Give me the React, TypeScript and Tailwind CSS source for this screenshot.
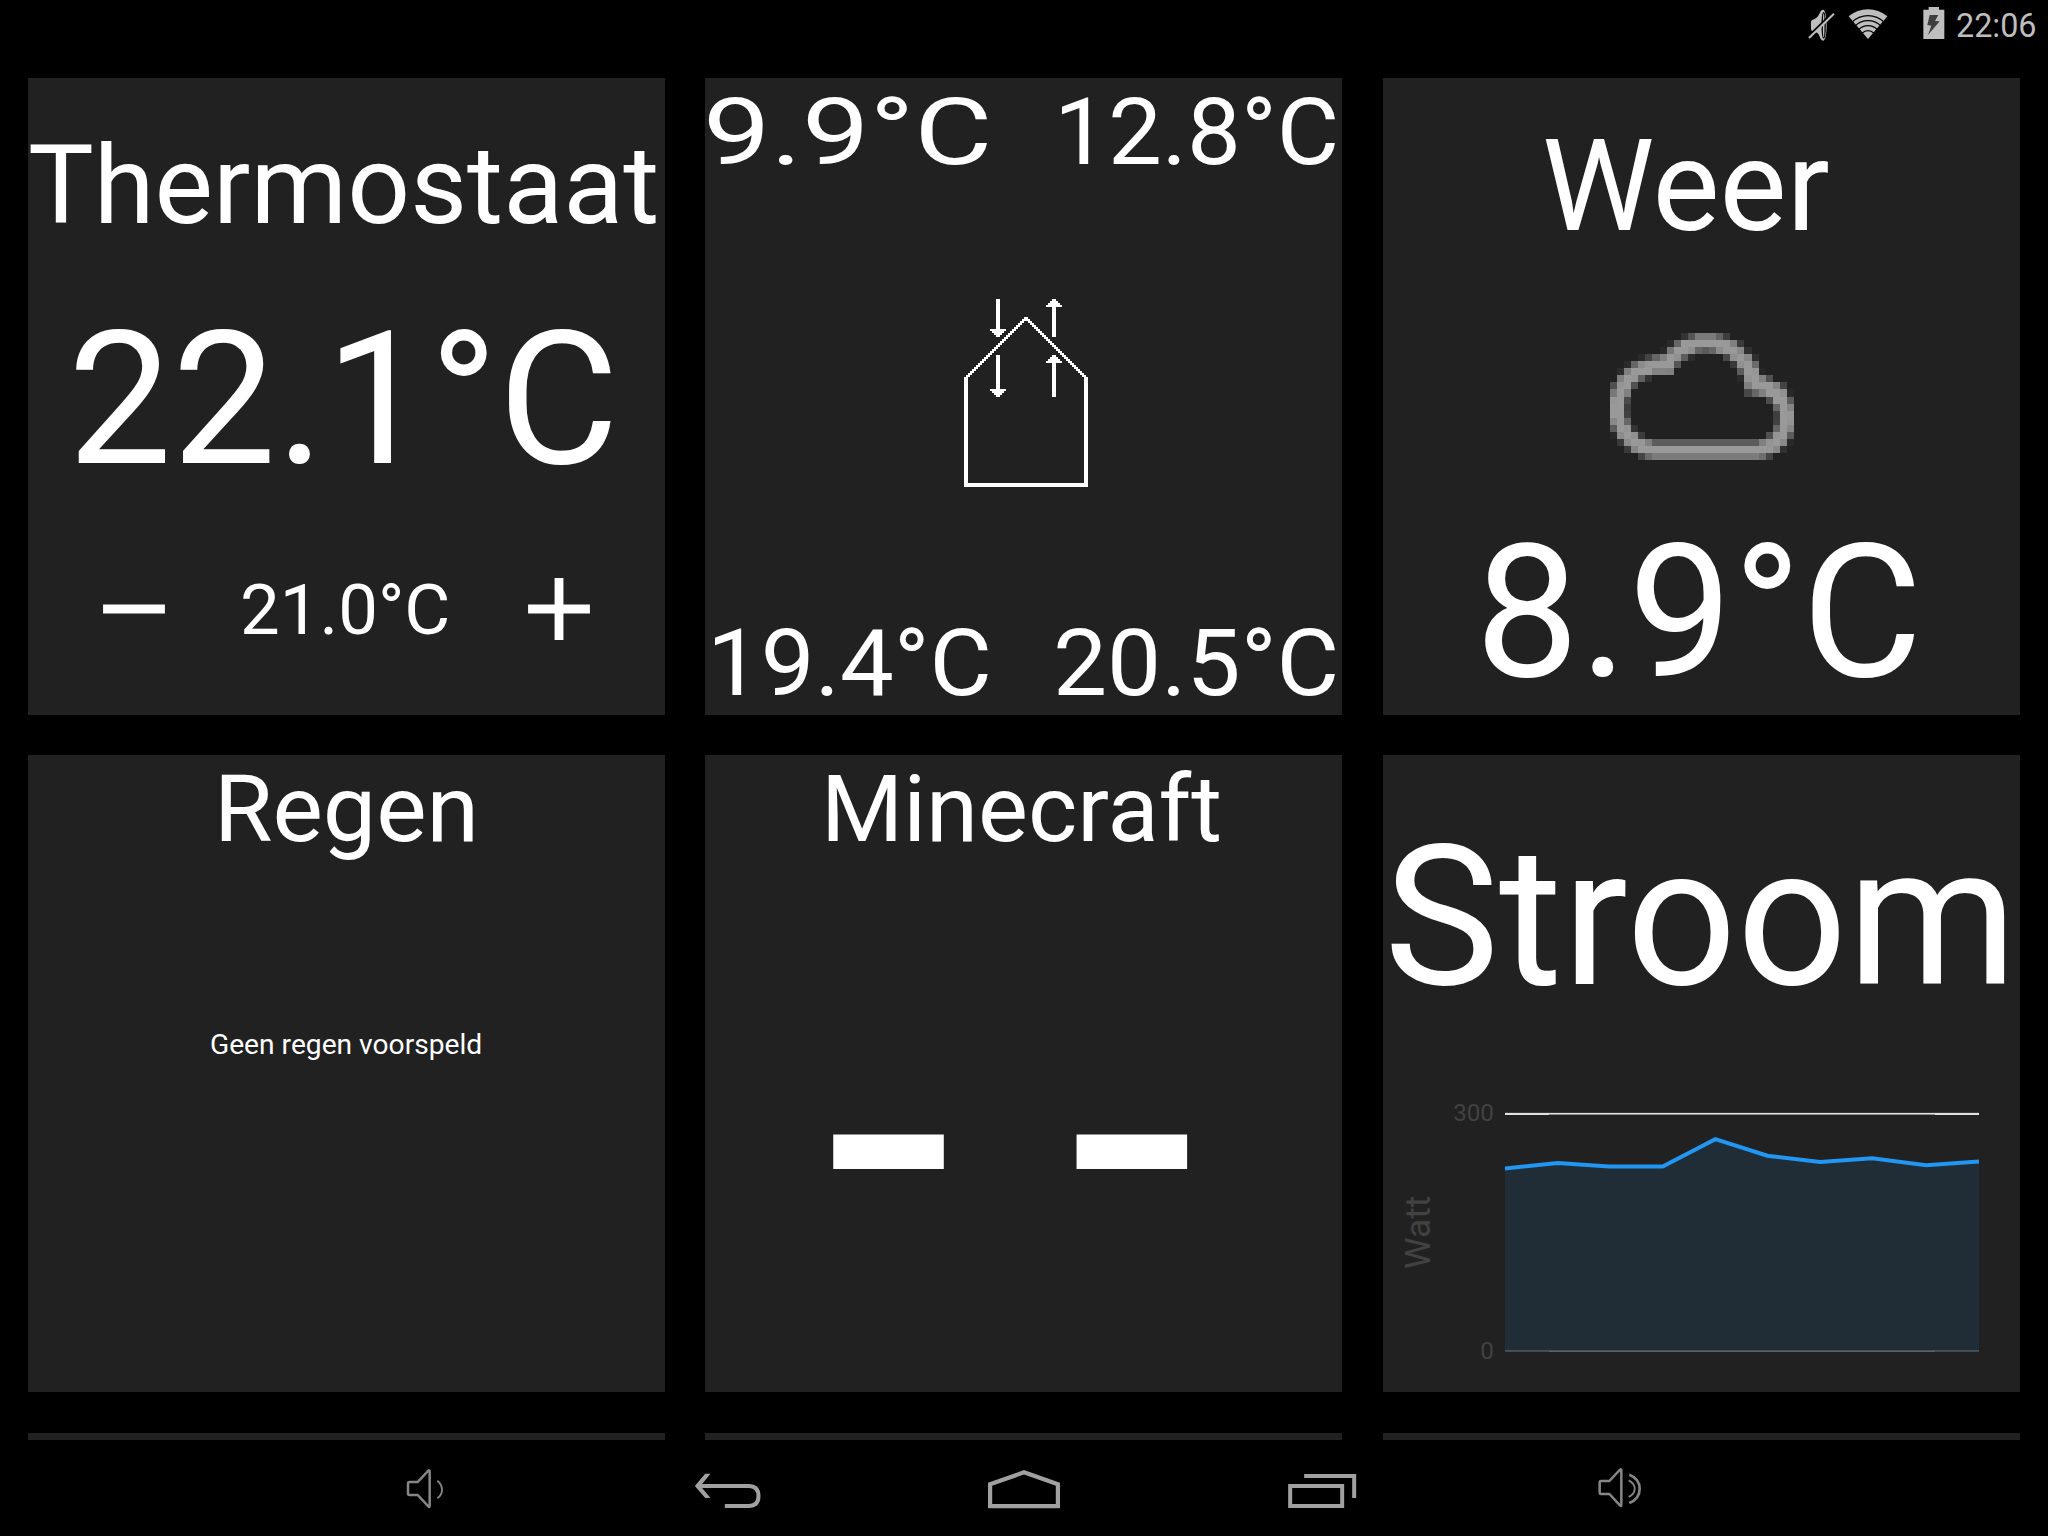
import React from "react";
import type { ReactNode } from "react";

/* Gray levels of the weather icon, one two-digit hex value per pixel; ".." is transparent. */
const CLOUD = [
  ".. .. .. .. .. .. .. .. .. .. 33 55 7b 7b 7b 62 3d .. .. .. .. .. .. .. .. ..",
  ".. .. .. .. .. .. .. .. 2a 66 99 99 99 99 99 99 99 80 3a .. .. .. .. .. .. ..",
  ".. .. .. .. .. .. .. 28 77 99 97 8f 66 5a 66 8c 99 99 88 30 .. .. .. .. .. ..",
  ".. .. .. .. 2a 44 66 80 99 90 5c 2c .. .. .. .. 48 90 99 88 2e .. .. .. .. ..",
  ".. .. 2a 66 8c 97 99 99 99 55 .. .. .. .. .. .. .. 38 90 99 6a .. .. .. .. ..",
  ".. 2c 80 99 99 99 83 83 80 .. .. .. .. .. .. .. .. .. 5c 99 96 26 .. .. .. ..",
  ".. 80 99 95 60 33 .. .. .. .. .. .. .. .. .. .. .. .. 2a 94 99 80 50 .. .. ..",
  "50 95 99 50 .. .. .. .. .. .. .. .. .. .. .. .. .. .. .. 80 99 99 99 85 44 ..",
  "78 99 80 .. .. .. .. .. .. .. .. .. .. .. .. .. .. .. .. 48 66 80 99 99 90 28",
  "96 99 4a .. .. .. .. .. .. .. .. .. .. .. .. .. .. .. .. .. .. .. 4c 99 99 5c",
  "99 99 3c .. .. .. .. .. .. .. .. .. .. .. .. .. .. .. .. .. .. .. .. 66 99 85",
  "99 99 40 .. .. .. .. .. .. .. .. .. .. .. .. .. .. .. .. .. .. .. .. 3e 99 96",
  "88 99 66 .. .. .. .. .. .. .. .. .. .. .. .. .. .. .. .. .. .. .. .. 40 99 94",
  "5c 99 94 33 .. .. .. .. .. .. .. .. .. .. .. .. .. .. .. .. .. .. .. 66 99 88",
  "28 8c 99 90 3c .. .. .. .. .. .. .. .. .. .. .. .. .. .. .. .. .. 50 94 99 5c",
  ".. 3a 8c 99 97 80 5c 5c 5c 5c 5c 5c 5c 5c 5c 5c 5c 5c 5c 5c 5c 80 94 99 88 28",
  ".. .. 3a 85 99 99 99 99 99 99 99 99 99 99 99 99 99 99 99 99 99 99 97 88 30 ..",
  ".. .. .. .. 44 6a 7b 7b 7b 7b 7b 7b 7b 7b 7b 7b 7b 7b 7b 7b 7b 6e 44 .. .. ..",
].map((row) => row.split(" "));

/* Area chart samples: [x, y] inside the 474x262 plot. */
const POWER: [number, number][] = [
  [0, 67.4], [52.6, 62], [104, 65.5], [157.7, 65.5], [210.3, 38.2],
  [262.4, 54.7], [315, 61], [367.1, 57.2], [421, 64.2], [474, 60.4],
];

function Tile({ children }: { children?: ReactNode }) {
  return <section className="flex flex-col items-start bg-[#212121]">{children}</section>;
}

function Label({ className, children }: { className: string; children: ReactNode }) {
  return <p className={`shrink-0 origin-left whitespace-pre leading-none ${className}`}>{children}</p>;
}

function Minus() {
  return (
    <svg className="size-[106px] shrink-0" viewBox="0 0 24 24" fill="currentColor">
      <path d="M5 11h14v2H5z" />
    </svg>
  );
}

function Plus() {
  return (
    <svg className="size-[106px] shrink-0" viewBox="0 0 24 24" fill="currentColor">
      <path d="M19 13h-6v6h-2v-6H5v-2h6V5h2v6h6z" />
    </svg>
  );
}

/* Pixel-art arrow on the 2px grid; `y` is the top and `h` the length in grid cells. */
function Arrow({ x, y, h, up }: { x: number; y: number; h: number; up?: boolean }) {
  return (
    <>
      <rect x={x} y={y} width={2} height={h} />
      {[1, 2, 3].map((i) => (
        <rect key={i} x={x - i} y={up ? y + i : y + h - 1 - i} width={2 + 2 * i} height={1} />
      ))}
    </>
  );
}

function House() {
  return (
    <svg
      className="mt-[120.4px] ml-[258.67px] h-[188px] w-[124px] shrink-0"
      viewBox="0 0 62 94"
      fill="#fff"
      shapeRendering="crispEdges"
    >
      {Array.from({ length: 30 }, (_, i) => (
        <g key={i}>
          <rect x={30 - i} y={9 + i} width={2} height={1} />
          <rect x={30 + i} y={9 + i} width={2} height={1} />
        </g>
      ))}
      <path d="M0 39h2v53h58V39h2v55H0z" />
      <Arrow x={16} y={0} h={19} />
      <Arrow x={16} y={28} h={21} />
      <Arrow x={44} y={0} h={19} up />
      <Arrow x={44} y={28} h={21} up />
    </svg>
  );
}

function Cloud() {
  return (
    <svg
      className="mt-[82.9px] ml-[227.33px] h-[127px] w-[184px] shrink-0"
      viewBox="0 0 26 18"
      preserveAspectRatio="none"
      shapeRendering="crispEdges"
    >
      {CLOUD.map((row, y) =>
        row.map((c, x) =>
          c === ".." ? null : <rect key={`${x}-${y}`} x={x} y={y} width={1} height={1} fill={`#${c}${c}${c}`} />,
        ),
      )}
    </svg>
  );
}

function PowerChart() {
  const line = POWER.map(([x, y]) => `${x},${y}`).join(" ");
  return (
    <div className="mt-[85.7px] ml-[18.6px] flex h-[262px] shrink-0 text-[#424242]">
      <div className="mt-[94.4px] h-[74px] w-[36px] rotate-180 text-[35.5px] leading-none [writing-mode:vertical-rl]">
        Watt
      </div>
      <div className="ml-[12.7px] mt-[0.5px] flex h-[262px] w-[44px] flex-col justify-between text-right text-[24px] leading-none">
        <span className="origin-right scale-x-[1.01]">300</span>
        <span className="origin-right scale-x-[1.01]">0</span>
      </div>
      <svg className="ml-[11px] h-[262px] w-[474px]" viewBox="0 0 474 262" fill="none">
        <g shapeRendering="crispEdges">
          <rect x="0" y="11" width="474" height="1" fill="#3a3a3a" />
          <rect x="0" y="12" width="474" height="2" fill="#e0e0e0" />
          <rect x="44" y="13" width="386" height="1" fill="#8e8e8e" />
        </g>
        <polygon points={`0,250 ${line} 474,250`} fill="#2196f3" fillOpacity="0.1" />
        <g shapeRendering="crispEdges">
          <rect x="0" y="249" width="474" height="1" fill="#46535b" />
          <rect x="0" y="250" width="474" height="1" fill="#43484b" />
          <rect x="44" y="250" width="386" height="1" fill="#5c6266" />
        </g>
        <polyline points={line} stroke="#2196f3" strokeWidth="4" />
      </svg>
    </div>
  );
}

function StatusBar() {
  return (
    <header className="flex h-[78px] shrink-0 items-start pr-[11px] text-[#bebebe]">
      <svg className="ml-auto h-12 w-[28px]" viewBox="83 0 84 144">
        <path
          d="M92 64Q94 59 101 58C111 53 116 45 120 35Q124 28 129 29C135 31 139 50 139 76C139 101 135 121 129 122Q124 123 120 115L115 103Q110 96 101 95Q92 93 92 86Z"
          fill="currentColor"
        />
        <ellipse cx="130" cy="76" rx="4.5" ry="38" fill="none" stroke="#000" strokeWidth="4" />
        <path d="M85 109L158 38" stroke="#000" strokeWidth="7" />
        <path d="M86 114L161 41" stroke="currentColor" strokeWidth="6" />
      </svg>
      <svg className="ml-[12.5px] h-12 w-[40px]" viewBox="203 0 120 144" fill="none">
        <path d="M263 117L205 49Q231 28 263 28T321 49Z" fill="currentColor" />
        <g stroke="#000" strokeWidth="3.5">
          <circle cx="263" cy="116" r="69" />
          <circle cx="263" cy="116" r="54" />
          <circle cx="263" cy="116" r="39" />
          <circle cx="263" cy="116" r="24" />
        </g>
      </svg>
      <svg className="ml-[35px] h-12 w-[22px]" viewBox="428 0 66 144">
        <path d="M445 21h31v8h16v88h-63V29h16z" fill="currentColor" />
        <path d="M448 45h26l-10 18 14 1-35 41 10-28-12-2z" fill="#3f3f3f" />
      </svg>
      <span className="mt-[9px] ml-[11px] w-[81px] origin-left scale-x-[0.98] text-[33px] leading-none">22:06</span>
    </header>
  );
}

const SPEAKER =
  "M88 126H113L145 92Q149 89 149 94V198Q149 203 145 199L113 165H88Q84 165 84 160V131Q84 126 88 126Z";

function NavIcon({ viewBox, children }: { viewBox: string; children: ReactNode }) {
  return (
    <button className="flex w-[298.5px] items-center justify-center">
      <svg className="h-[60px] w-[96px]" viewBox={viewBox} fill="none">
        {children}
      </svg>
    </button>
  );
}

function NavBar() {
  return (
    <nav className="flex h-24 shrink-0 justify-center bg-black">
      <NavIcon viewBox="-3 54 288 180">
        <g stroke="#868686">
          <path d={SPEAKER} strokeWidth="7.5" />
          <path d="M172 122Q186 133 186 149T172 175" strokeWidth="5.5" />
        </g>
      </NavIcon>
      <NavIcon viewBox="894.5 54 288 180">
        <path d="M958 138H1106Q1136 138 1136 168T1106 198H1035" stroke="#a0a0a0" strokeWidth="12" />
        <path d="M945 138L976 101H992L965 134V142L992 174H976Z" fill="#a0a0a0" />
      </NavIcon>
      <NavIcon viewBox="976 1458 96 60">
        <path d="M990.1 1484.2L1024 1472.3L1057.9 1484.2V1506.2H990.1Z" stroke="#a0a0a0" strokeWidth="4.2" />
      </NavIcon>
      <NavIcon viewBox="14.5 9 288 180">
        <path d="M60 93H216V153H60ZM102 63H252V129" stroke="#a0a0a0" strokeWidth="12" />
      </NavIcon>
      <NavIcon viewBox="909 7 288 180">
        <g stroke="#868686">
          <path d={SPEAKER} strokeWidth="7.5" transform="translate(905 -50)" />
          <path d="M1076 74Q1094 83 1094 99T1076 124" strokeWidth="5.5" />
          <path d="M1078 57Q1109 69 1109 99T1078 142" strokeWidth="8" />
        </g>
      </NavIcon>
    </nav>
  );
}

export default function App() {
  return (
    <div className="flex h-[1536px] w-[2048px] flex-col overflow-hidden bg-black font-[Roboto,sans-serif] text-white">
      <StatusBar />
      <main className="grid h-[1362px] shrink-0 auto-rows-[637px] grid-cols-[repeat(3,637px)] gap-[40.33px] overflow-hidden px-7">
        <Tile>
          <Label className="mt-[53.3px] ml-[0.3px] scale-x-[1.003] text-[110px]">Thermostaat</Label>
          <Label className="mt-[65.8px] ml-[39.8px] text-[185.3px]">22.1°C</Label>
          <div className="mt-[63.6px] ml-[52.8px] flex items-center">
            <Minus />
            <Label className="mt-[1px] ml-[53.5px] scale-x-[0.996] text-[71px]">21.0°C</Label>
            <div className="ml-[54.4px]">
              <Plus />
            </div>
          </div>
        </Tile>

        <Tile>
          <div className="mt-[7.6px] flex w-full">
            <Label className="ml-[-2.3px] w-[351.4px] scale-x-[1.29] text-[93px]">9.9°C</Label>
            <Label className="scale-x-[1.031] text-[93px]">12.8°C</Label>
          </div>
          <House />
          <div className="mt-[129.7px] flex w-full">
            <Label className="ml-[1.3px] w-[346.6px] scale-x-[1.03] text-[93px]">19.4°C</Label>
            <Label className="scale-x-[1.035] text-[93px]">20.5°C</Label>
          </div>
        </Tile>

        <Tile>
          <Label className="mt-[44.1px] ml-[159.2px] scale-x-[0.989] text-[128px]">Weer</Label>
          <Cloud />
          <Label className="mt-[60.1px] ml-[92.2px] scale-x-[1.001] text-[185.3px]">8.9°C</Label>
        </Tile>

        <Tile>
          <Label className="mt-[7.4px] ml-[186.1px] scale-x-[1.021] text-[93px]">Regen</Label>
          <Label className="mt-[175.4px] ml-[181.5px] scale-x-[1.006] text-[28px]">Geen regen voorspeld</Label>
        </Tile>

        <Tile>
          <Label className="mt-[7.4px] ml-[115.7px] scale-x-[1.0125] text-[93px]">Minecraft</Label>
          <Label className="mt-[46.6px] ml-[119.3px] text-[464px]">- -</Label>
        </Tile>

        <Tile>
          <Label className="mt-[65.9px] ml-[1.3px] scale-x-[0.999] text-[194px]">Stroom</Label>
          <PowerChart />
        </Tile>

        <Tile />
        <Tile />
        <Tile />
      </main>
      <NavBar />
    </div>
  );
}
